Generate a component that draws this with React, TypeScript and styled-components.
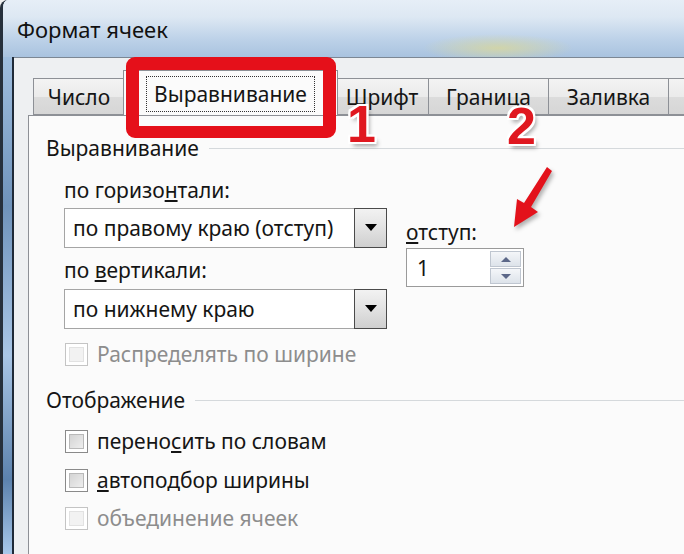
import React from 'react'
import styled, { createGlobalStyle } from 'styled-components'

const GlobalStyle = createGlobalStyle`
  html, body {
    margin: 0;
    padding: 0;
  }
  body {
    width: 684px;
    height: 554px;
    overflow: hidden;
    background: #f0f0f0;
    font-family: 'Noto Sans', 'DejaVu Sans', sans-serif;
    color: #151515;
  }
`

const Window = styled.div`
  position: relative;
  width: 684px;
  height: 554px;
  overflow: hidden;
  display: flex;
  flex-direction: column;
  border-left: 3px solid #26303c;
  box-sizing: border-box;
  border-top-left-radius: 8px;
  background: #c9d9ea;
`

const TitleBar = styled.div`
  height: 57px;
  flex-shrink: 0;
  display: flex;
  align-items: center;
  padding-left: 14px;
  font-size: 22px;
  color: #111;
  background:
    radial-gradient(ellipse 75px 14px at 495px 48px, rgba(214, 214, 160, 0.85), rgba(214, 214, 160, 0) 100%),
    linear-gradient(180deg, #e6eef7 0%, #dde8f3 30%, #bcd1e8 70%, #a9c3df 100%);
`

const Main = styled.div`
  flex: 1;
  display: flex;
  min-width: 0;
`

const FrameSide = styled.div`
  width: 9px;
  flex-shrink: 0;
  border-right: 2px solid #1f2a38;
  background: linear-gradient(180deg, #9fbedf 0%, #6f93bb 30%, #a9c6e6 60%, #5c82ad 85%, #a8c8ea 100%);
`

const Client = styled.div`
  flex: 1;
  min-width: 0;
  display: flex;
  flex-direction: column;
  padding-left: 14px;
  background: #eef0f2;
  border-top: 1px solid #7c8794;
`

const TabStrip = styled.div`
  height: 57px;
  display: flex;
  align-items: flex-end;
  padding-left: 5px;
  overflow: hidden;
`

const Tab = styled.div<{ $w: number; $active?: boolean }>`
  box-sizing: border-box;
  flex-shrink: 0;
  width: ${(p) => p.$w}px;
  height: ${(p) => (p.$active ? 46 : 37)}px;
  margin: 0 ${(p) => (p.$active ? -2 : 0)}px ${(p) => (p.$active ? -1 : 0)}px;
  position: relative;
  z-index: ${(p) => (p.$active ? 2 : 1)};
  display: flex;
  align-items: center;
  justify-content: center;
  font-size: 21px;
  white-space: nowrap;
  border: 1px solid #8d9096;
  border-bottom: ${(p) => (p.$active ? 'none' : '1px solid #8d9096')};
  border-left-width: ${(p) => (p.$active ? 1 : 0)}px;
  background: ${(p) =>
    p.$active ? '#fbfbfb' : 'linear-gradient(180deg, #f3f3f3 0%, #ebebeb 50%, #dcdcdc 51%, #d6d6d6 100%)'};
  &:first-child {
    border-left-width: 1px;
  }
`

const FocusText = styled.span`
  padding: 3px 7px;
  outline: 1px dotted #333;
`

const Panel = styled.div`
  flex: 1;
  background: #fbfbfb;
  border-top: 1px solid #8d9096;
  border-left: 1px solid #8d9096;
  padding-left: 17px;
  display: flex;
  flex-direction: column;
`

const GroupTitle = styled.div<{ $top: number }>`
  margin-top: ${(p) => p.$top}px;
  height: 24px;
  display: flex;
  align-items: center;
  gap: 10px;
  font-size: 21px;
  &::after {
    content: '';
    flex: 1;
    height: 1px;
    background: #d5d9dc;
  }
`

const Indent = styled.div`
  padding-left: 18px;
  display: flex;
  flex-direction: column;
`

const Row = styled.div`
  display: flex;
  gap: 19px;
`

const Col = styled.div<{ $pad?: number }>`
  display: flex;
  flex-direction: column;
  padding-top: ${(p) => p.$pad || 0}px;
`

const Label = styled.div<{ $top: number }>`
  margin-top: ${(p) => p.$top}px;
  height: 24px;
  line-height: 24px;
  font-size: 21px;
  white-space: nowrap;
`

const Select = styled.div<{ $top: number }>`
  margin-top: ${(p) => p.$top}px;
  box-sizing: border-box;
  width: 323px;
  height: 40px;
  border: 1px solid #a5a5a5;
  background: #fff;
  display: flex;
  align-items: stretch;
  font-size: 21px;
`

const SelectText = styled.div`
  flex: 1;
  padding-left: 8px;
  display: flex;
  align-items: center;
  white-space: nowrap;
`

const DropButton = styled.div`
  width: 31px;
  margin: -1px -1px -1px 0;
  border: 1px solid #4a4a4a;
  background: linear-gradient(180deg, #f2f2f2 0%, #e4e4e4 45%, #cfcfcf 100%);
  display: flex;
  align-items: center;
  justify-content: center;
  &::after {
    content: '';
    border-left: 6px solid transparent;
    border-right: 6px solid transparent;
    border-top: 7px solid #000;
    margin-top: -2px;
  }
`

const Spinner = styled.div`
  margin-top: 4px;
  box-sizing: border-box;
  width: 118px;
  height: 39px;
  border: 1px solid #9a9a9a;
  background: #fff;
  display: flex;
  font-size: 21px;
`

const SpinValue = styled.div`
  flex: 1;
  padding-left: 10px;
  display: flex;
  align-items: center;
`

const SpinButtons = styled.div`
  width: 31px;
  padding: 2px 2px 2px 0;
  display: flex;
  flex-direction: column;
  gap: 1px;
`

const SpinButton = styled.div<{ $up?: boolean }>`
  flex: 1;
  border: 1px solid #bfc6d0;
  background: linear-gradient(180deg, #f4f6f9 0%, #dde3ea 100%);
  display: flex;
  align-items: center;
  justify-content: center;
  &::after {
    content: '';
    border-left: 5px solid transparent;
    border-right: 5px solid transparent;
    ${(p) => (p.$up ? 'border-bottom: 5px solid #5b6788;' : 'border-top: 5px solid #5b6788;')}
  }
`

const CheckRow = styled.div<{ $top: number; $disabled?: boolean }>`
  margin-top: ${(p) => p.$top}px;
  margin-left: 1px;
  height: 24px;
  display: flex;
  align-items: center;
  gap: 9px;
  font-size: 21px;
  white-space: nowrap;
  color: ${(p) => (p.$disabled ? '#8d8d8d' : '#151515')};
`

const Box = styled.span<{ $disabled?: boolean }>`
  box-sizing: border-box;
  flex-shrink: 0;
  width: 23px;
  height: 23px;
  border: 1px solid ${(p) => (p.$disabled ? '#c4c4c4' : '#8a8a8a')};
  background: #fff;
  padding: 3px;
  display: flex;
  &::after {
    content: '';
    flex: 1;
    border: 1px solid ${(p) => (p.$disabled ? '#e2e2e2' : '#b9b9b9')};
    background: ${(p) =>
      p.$disabled ? '#f2f2f2' : 'linear-gradient(135deg, #d4d4d4 0%, #eeeeee 100%)'};
  }
`

const Highlight = styled.div`
  position: absolute;
  left: 123px;
  top: 57px;
  width: 210px;
  height: 81px;
  box-sizing: border-box;
  border: 13px solid #e5101a;
  border-bottom-width: 12px;
  border-radius: 9px;
  z-index: 5;
`

const Marker = styled.div<{ $x: number; $y: number }>`
  position: absolute;
  left: ${(p) => p.$x}px;
  top: ${(p) => p.$y}px;
  z-index: 6;
  font-family: 'Liberation Sans', Arial, sans-serif;
  font-weight: bold;
  font-size: 52px;
  line-height: 1;
  color: #e01820;
  text-shadow:
    2px 2px 0 #fff, -2px -2px 0 #fff, 2px -2px 0 #fff, -2px 2px 0 #fff,
    0 2px 0 #fff, 2px 0 0 #fff, 0 -2px 0 #fff, -2px 0 0 #fff,
    3px 4px 4px rgba(0, 0, 0, 0.35);
`

const Arrow = styled.svg`
  position: absolute;
  left: 502px;
  top: 161px;
  z-index: 6;
  filter: drop-shadow(2px 3px 2px rgba(0, 0, 0, 0.3));
`

export default function App() {
  return (
    <>
      <GlobalStyle />
      <Window>
        <TitleBar>Формат ячеек</TitleBar>
        <Main>
          <FrameSide />
          <Client>
            <TabStrip>
              <Tab $w={92}>Число</Tab>
              <Tab $w={215} $active>
                <FocusText>Выравнивание</FocusText>
              </Tab>
              <Tab $w={93}>Шрифт</Tab>
              <Tab $w={120}>Граница</Tab>
              <Tab $w={120}>Заливка</Tab>
              <Tab $w={150}>Защита</Tab>
            </TabStrip>
            <Panel>
              <GroupTitle $top={20}>Выравнивание</GroupTitle>
              <Indent>
                <Row>
                  <Col>
                    <Label $top={18}>
                      по горизо<u>н</u>тали:
                    </Label>
                    <Select $top={6}>
                      <SelectText>по правому краю (отступ)</SelectText>
                      <DropButton />
                    </Select>
                    <Label $top={10}>
                      по <u>в</u>ертикали:
                    </Label>
                    <Select $top={7}>
                      <SelectText>по нижнему краю</SelectText>
                      <DropButton />
                    </Select>
                  </Col>
                  <Col $pad={60}>
                    <Label $top={0}>
                      <u>о</u>тступ:
                    </Label>
                    <Spinner>
                      <SpinValue>1</SpinValue>
                      <SpinButtons>
                        <SpinButton $up />
                        <SpinButton />
                      </SpinButtons>
                    </Spinner>
                  </Col>
                </Row>
                <CheckRow $top={13} $disabled>
                  <Box $disabled />
                  Распределять по ширине
                </CheckRow>
              </Indent>
              <GroupTitle $top={22}>Отображение</GroupTitle>
              <Indent>
                <CheckRow $top={17}>
                  <Box />
                  <span>
                    перено<u>с</u>ить по словам
                  </span>
                </CheckRow>
                <CheckRow $top={15}>
                  <Box />
                  <span>
                    <u>а</u>втоподбор ширины
                  </span>
                </CheckRow>
                <CheckRow $top={14} $disabled>
                  <Box $disabled />
                  объединение ячеек
                </CheckRow>
              </Indent>
            </Panel>
          </Client>
        </Main>
        <Highlight />
        <Marker $x={344} $y={98}>1</Marker>
        <Marker $x={504} $y={100}>2</Marker>
        <Arrow width="50" height="75" viewBox="0 0 50 75">
          <polygon points="42,6 47,10 26,46 33,51 9,66 12,38 19,42" fill="#e3121b" />
        </Arrow>
      </Window>
    </>
  )
}
